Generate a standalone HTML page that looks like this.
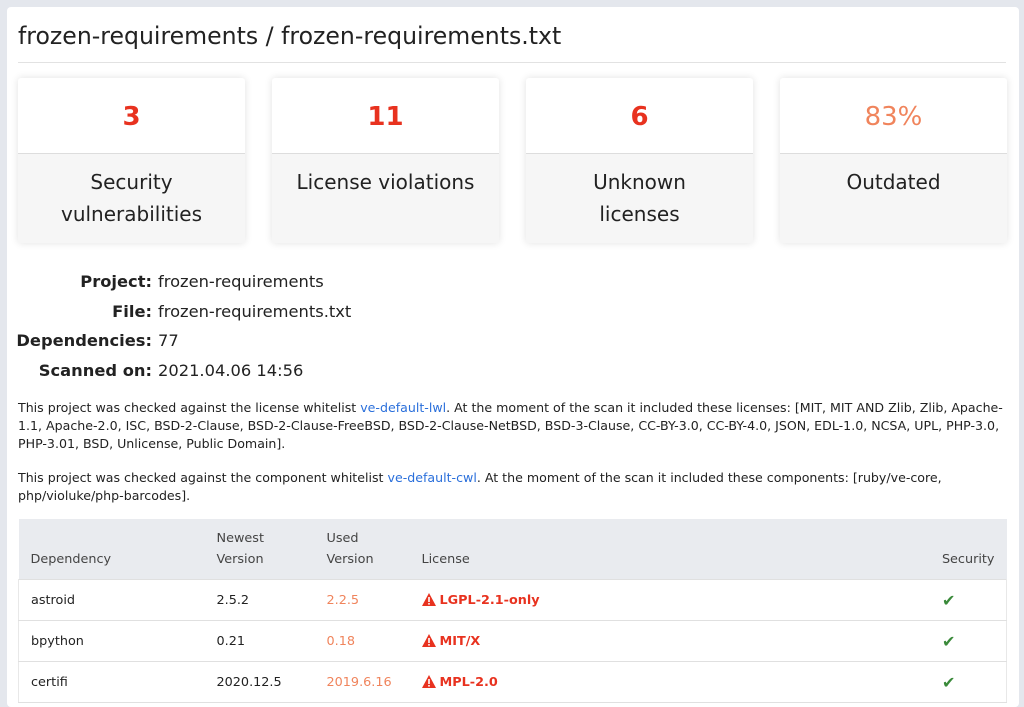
<!DOCTYPE html>
<html><head><meta charset="utf-8"><style>
*{box-sizing:border-box;margin:0;padding:0}
body{width:1024px;height:684px;overflow:hidden;background:#e4e7ed;font-family:"DejaVu Sans","Liberation Sans",sans-serif;color:#222}
.card{position:absolute;left:7px;top:7px;width:1012px;height:700px;background:#fff;border-radius:4px}
h1{position:absolute;left:11px;top:15px;font-weight:normal;font-size:23.6px;color:#222}
.hr{position:absolute;left:11px;top:55px;width:988px;height:1px;background:#e2e2e2}
.stat{position:absolute;top:71px;width:227px;height:165px;border-radius:3px;box-shadow:0 0 8px rgba(0,0,0,.12);background:#f6f6f6;overflow:hidden}
.stat .n{height:76px;background:#fff;border-bottom:1px solid #ddd;text-align:center;line-height:78px;font-size:26px;font-weight:bold;color:#e8321f}
.stat .t{text-align:center;font-size:20px;line-height:32px;padding-top:12px;color:#222}
.info{position:absolute;left:0;top:260px;font-size:16.3px}
.info div{height:29.5px;line-height:29.5px}
.info b{display:inline-block;width:145px;text-align:right;margin-right:6px}
p{position:absolute;left:11px;width:996px;font-size:12.6px;line-height:18px;color:#222}
a{color:#2a6fdb;text-decoration:none}
table{position:absolute;left:11px;top:512px;width:989px;border-collapse:collapse;font-size:12.8px}
th{background:#e9ebef;font-weight:normal;text-align:left;vertical-align:bottom;height:60px;padding:0 12px 9px;color:#444;line-height:21px}
td{height:41px;padding:2px 12px 0;border-top:1px solid #e0e0e0;border-bottom:1px solid #e0e0e0}
tbody tr td:first-child{border-left:1px solid #e8e8e8}
tbody tr td:last-child{border-right:1px solid #e8e8e8}
.o{color:#f0845c}.r{color:#e8321f;font-weight:bold}.g{color:#3a8a3a;font-weight:bold;font-size:16px}
.w{display:inline-block;vertical-align:-2px;margin-right:4px}
</style></head><body>
<div class="card">
<h1>frozen-requirements / frozen-requirements.txt</h1>
<div class="hr"></div>
<div class="stat" style="left:11px"><div class="n">3</div><div class="t">Security<br>vulnerabilities</div></div>
<div class="stat" style="left:265px"><div class="n">11</div><div class="t">License violations</div></div>
<div class="stat" style="left:519px"><div class="n">6</div><div class="t">Unknown<br>licenses</div></div>
<div class="stat" style="left:773px"><div class="n" style="color:#f0845c;font-weight:normal">83%</div><div class="t">Outdated</div></div>
<div class="info">
<div><b>Project:</b>frozen-requirements</div>
<div><b>File:</b>frozen-requirements.txt</div>
<div><b>Dependencies:</b>77</div>
<div><b>Scanned on:</b>2021.04.06 14:56</div>
</div>
<p style="top:392px">This project was checked against the license whitelist <a>ve-default-lwl</a>. At the moment of the scan it included these licenses: [MIT, MIT AND Zlib, Zlib, Apache-1.1, Apache-2.0, ISC, BSD-2-Clause, BSD-2-Clause-FreeBSD, BSD-2-Clause-NetBSD, BSD-3-Clause, CC-BY-3.0, CC-BY-4.0, JSON, EDL-1.0, NCSA, UPL, PHP-3.0, PHP-3.01, BSD, Unlicense, Public Domain].</p>
<p style="top:462px">This project was checked against the component whitelist <a>ve-default-cwl</a>. At the moment of the scan it included these components: [ruby/ve-core, php/violuke/php-barcodes].</p>
<table>
<thead><tr><th style="width:186px">Dependency</th><th style="width:110px">Newest<br>Version</th><th style="width:95px">Used<br>Version</th><th>License</th><th style="width:64px">Security</th></tr></thead>
<tbody>
<tr><td>astroid</td><td>2.5.2</td><td class="o">2.2.5</td><td class="r"><svg class="w" width="14" height="13" viewBox="0 0 14 13"><path d="M7 0L14 13H0Z" fill="#e8321f"/><rect x="6.2" y="4" width="1.6" height="5" fill="#fff"/><rect x="6.2" y="10" width="1.6" height="1.6" fill="#fff"/></svg>LGPL-2.1-only</td><td class="g">✔</td></tr>
<tr><td>bpython</td><td>0.21</td><td class="o">0.18</td><td class="r"><svg class="w" width="14" height="13" viewBox="0 0 14 13"><path d="M7 0L14 13H0Z" fill="#e8321f"/><rect x="6.2" y="4" width="1.6" height="5" fill="#fff"/><rect x="6.2" y="10" width="1.6" height="1.6" fill="#fff"/></svg>MIT/X</td><td class="g">✔</td></tr>
<tr><td>certifi</td><td>2020.12.5</td><td class="o">2019.6.16</td><td class="r"><svg class="w" width="14" height="13" viewBox="0 0 14 13"><path d="M7 0L14 13H0Z" fill="#e8321f"/><rect x="6.2" y="4" width="1.6" height="5" fill="#fff"/><rect x="6.2" y="10" width="1.6" height="1.6" fill="#fff"/></svg>MPL-2.0</td><td class="g">✔</td></tr>
</tbody></table>
</div>
</body></html>
